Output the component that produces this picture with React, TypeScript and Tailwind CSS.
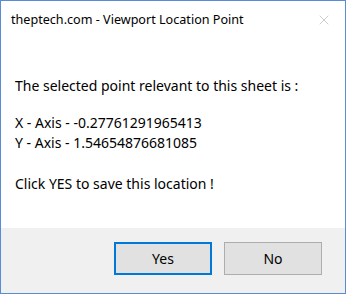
import { X } from "lucide-react";

export default function App() {
  return (
    <div className="flex h-[294px] w-[346px] flex-col border border-[#5a8bd5] bg-white font-['Noto_Sans',sans-serif] text-black">
      <div className="flex h-[38px] items-center justify-between pl-[10px] pr-[13px]">
        <span className="text-[12.6px]">theptech.com - Viewport Location Point</span>
        <X size={16} strokeWidth={1} className="text-[#b4b4b4]" />
      </div>
      <div className="flex-1 px-[14px] pt-[37px] text-[14px] leading-[20px]">
        <p>The selected point relevant to this sheet is :</p>
        <p className="mt-[17px]">X - Axis - -0.27761291965413</p>
        <p>Y - Axis - 1.54654876681085</p>
        <p className="mt-[21px]">Click YES to save this location !</p>
      </div>
      <div className="flex h-[65px] items-start justify-end gap-[12px] bg-[#f0f0f0] pr-[23px] pt-[14px] text-[14px]">
        <button className="h-[33px] w-[98px] border-2 border-[#0078d7] bg-[#e1e1e1]">Yes</button>
        <button className="h-[33px] w-[98px] border border-[#adadad] bg-[#e1e1e1]">No</button>
      </div>
    </div>
  );
}
